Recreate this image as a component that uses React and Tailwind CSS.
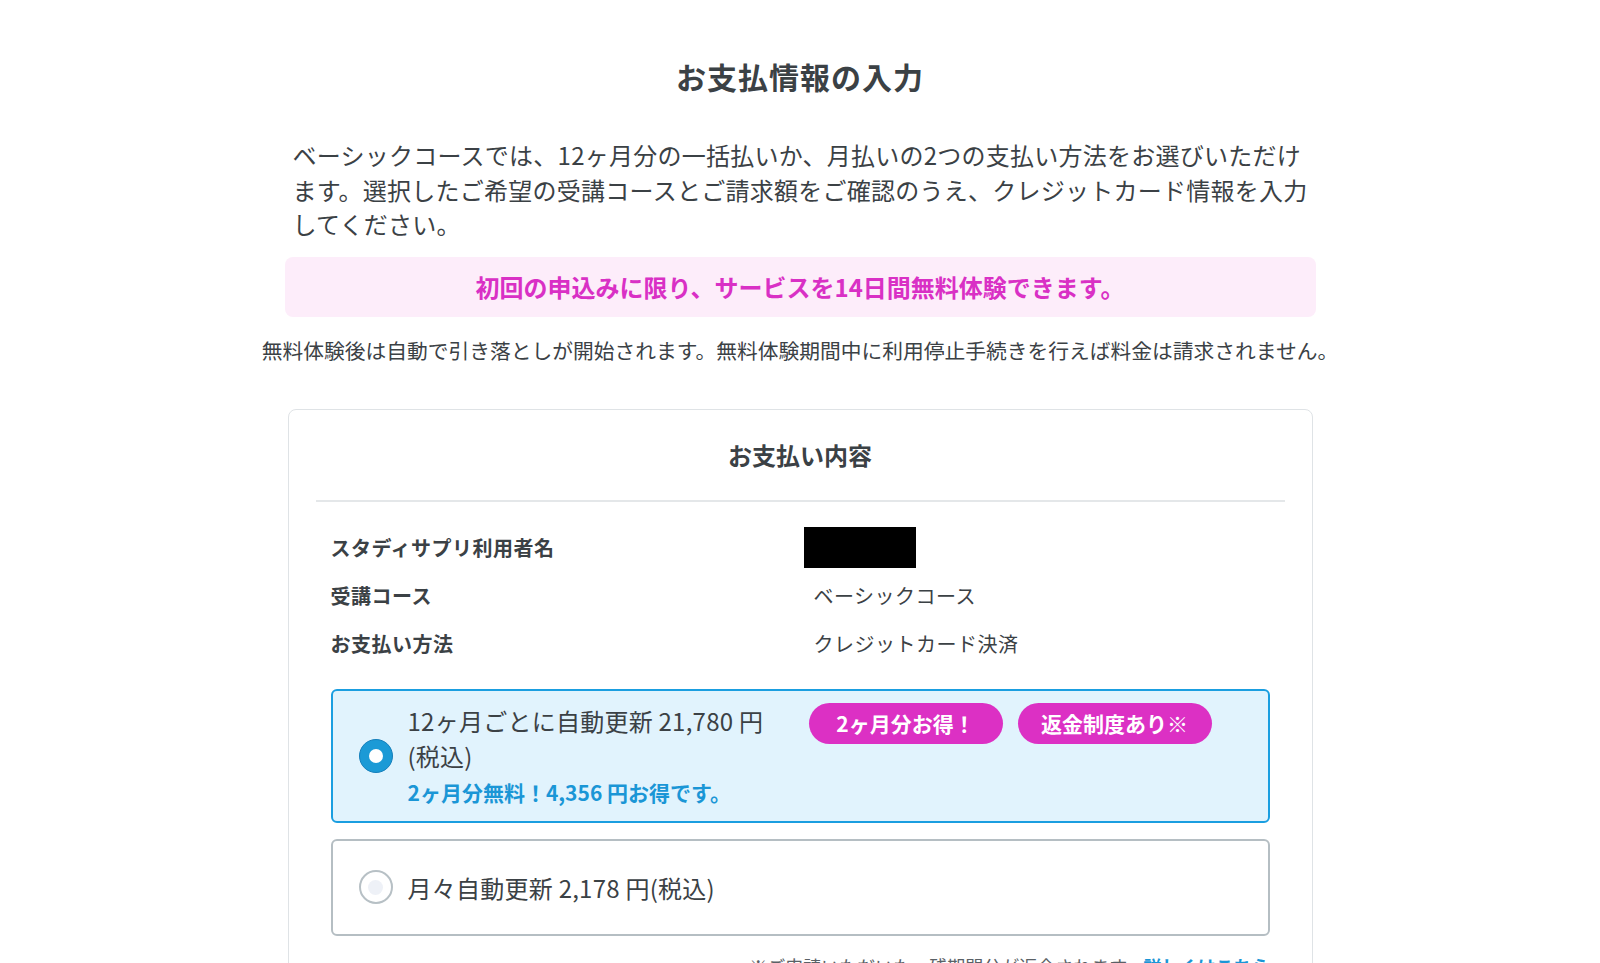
export default function App() {
  return (
    <div className="min-h-screen bg-white font-['Noto_Sans_CJK_JP',sans-serif] text-[#3b4145]">
      <div className="mx-auto w-[1031px] pt-[54px]">
        <h1 className="text-center text-[30px] font-bold leading-[45px] tracking-[1px] text-[#3b4145]">
          お支払情報の入力
        </h1>
        <p className="mt-[39px] px-[8px] text-[24px] leading-[34.5px] tracking-[0.25px]">
          ベーシックコースでは、12ヶ月分の一括払いか、月払いの2つの支払い方法をお選びいただけます。選択したご希望の受講コースとご請求額をご確認のうえ、クレジットカード情報を入力してください。
        </p>
        <div className="mt-[15px] flex h-[60px] items-center justify-center rounded-[8px] bg-[#fdedfa] text-[24px] font-bold text-[#d930c5]">
          初回の申込みに限り、サービスを14日間無料体験できます。
        </div>
        <div className="mt-[17px] flex justify-center">
          <p className="whitespace-nowrap text-[20.75px] leading-[32px]">
            無料体験後は自動で引き落としが開始されます。無料体験期間中に利用停止手続きを行えば料金は請求されません。
          </p>
        </div>

        <div className="mx-[3px] mt-[43px] rounded-[8px] border border-[#dfe3e6] px-[27px] pt-[30px]">
          <div className="border-b-2 border-[#e4e7e9] pb-[30px] text-center text-[24px] font-bold leading-[30px]">
            お支払い内容
          </div>
          <div className="px-[15px] pt-[22px]">
            <div className="grid grid-cols-[483px_1fr] text-[20px] leading-[48px] tracking-[0.5px]">
              <div className="font-bold">スタディサプリ利用者名</div>
              <div className="flex items-center">
                <span className="-ml-[10px] block h-[41px] w-[112px] bg-black" />
              </div>
              <div className="font-bold">受講コース</div>
              <div>ベーシックコース</div>
              <div className="font-bold">お支払い方法</div>
              <div>クレジットカード決済</div>
            </div>

            <div className="mt-[21px] flex h-[134px] items-center rounded-[6px] border-2 border-[#1a9ee0] bg-[#e1f3fd] pl-[26px]">
              <span className="flex h-[34px] w-[34px] shrink-0 items-center justify-center rounded-full border-[1.5px] border-[#157fbb] bg-[#1b9ad6]">
                <span className="h-[14px] w-[14px] rounded-full bg-white" />
              </span>
              <div className="ml-[15px] flex flex-1 items-start self-start pt-[12.5px]">
                <div className="w-[385px]">
                  <div className="text-[24px] leading-[35px] tracking-[0.25px]">
                    12ヶ月ごとに自動更新 21,780 円<span className="inline-block">(税込)</span>
                  </div>
                  <div className="mt-[4px] text-[21px] font-bold leading-[30px] text-[#1a96d6]">
                    2ヶ月分無料！4,356 円お得です。
                  </div>
                </div>
                <div className="ml-[16px] flex gap-[15px]">
                  <span className="flex h-[41px] w-[194px] items-center justify-center rounded-full bg-[#dc30c4] text-[21px] font-bold text-white">
                    2ヶ月分お得！
                  </span>
                  <span className="flex h-[41px] w-[194px] items-center justify-center rounded-full bg-[#dc30c4] text-[21px] font-bold text-white">
                    返金制度あり※
                  </span>
                </div>
              </div>
            </div>

            <div className="mt-[16px] flex h-[97px] items-center rounded-[6px] border-2 border-[#b5bec3] bg-white pl-[26px]">
              <span className="flex h-[34px] w-[34px] shrink-0 items-center justify-center rounded-full border-2 border-[#b7c0c5] bg-white">
                <span className="h-[15px] w-[15px] rounded-full bg-[#eef1f7]" />
              </span>
              <div className="ml-[15px] text-[24px] leading-[35px] tracking-[0.25px]">
                月々自動更新 2,178 円(税込)
              </div>
            </div>

            <p className="mt-[17px] text-right text-[18px] leading-[27px] text-[#5a6166]">
              ※ご申請いただいた、残期間分が返金されます。
              <span className="font-bold text-[#1a96d6]">詳しくはこちら</span>
            </p>
          </div>
        </div>
      </div>
    </div>
  );
}
